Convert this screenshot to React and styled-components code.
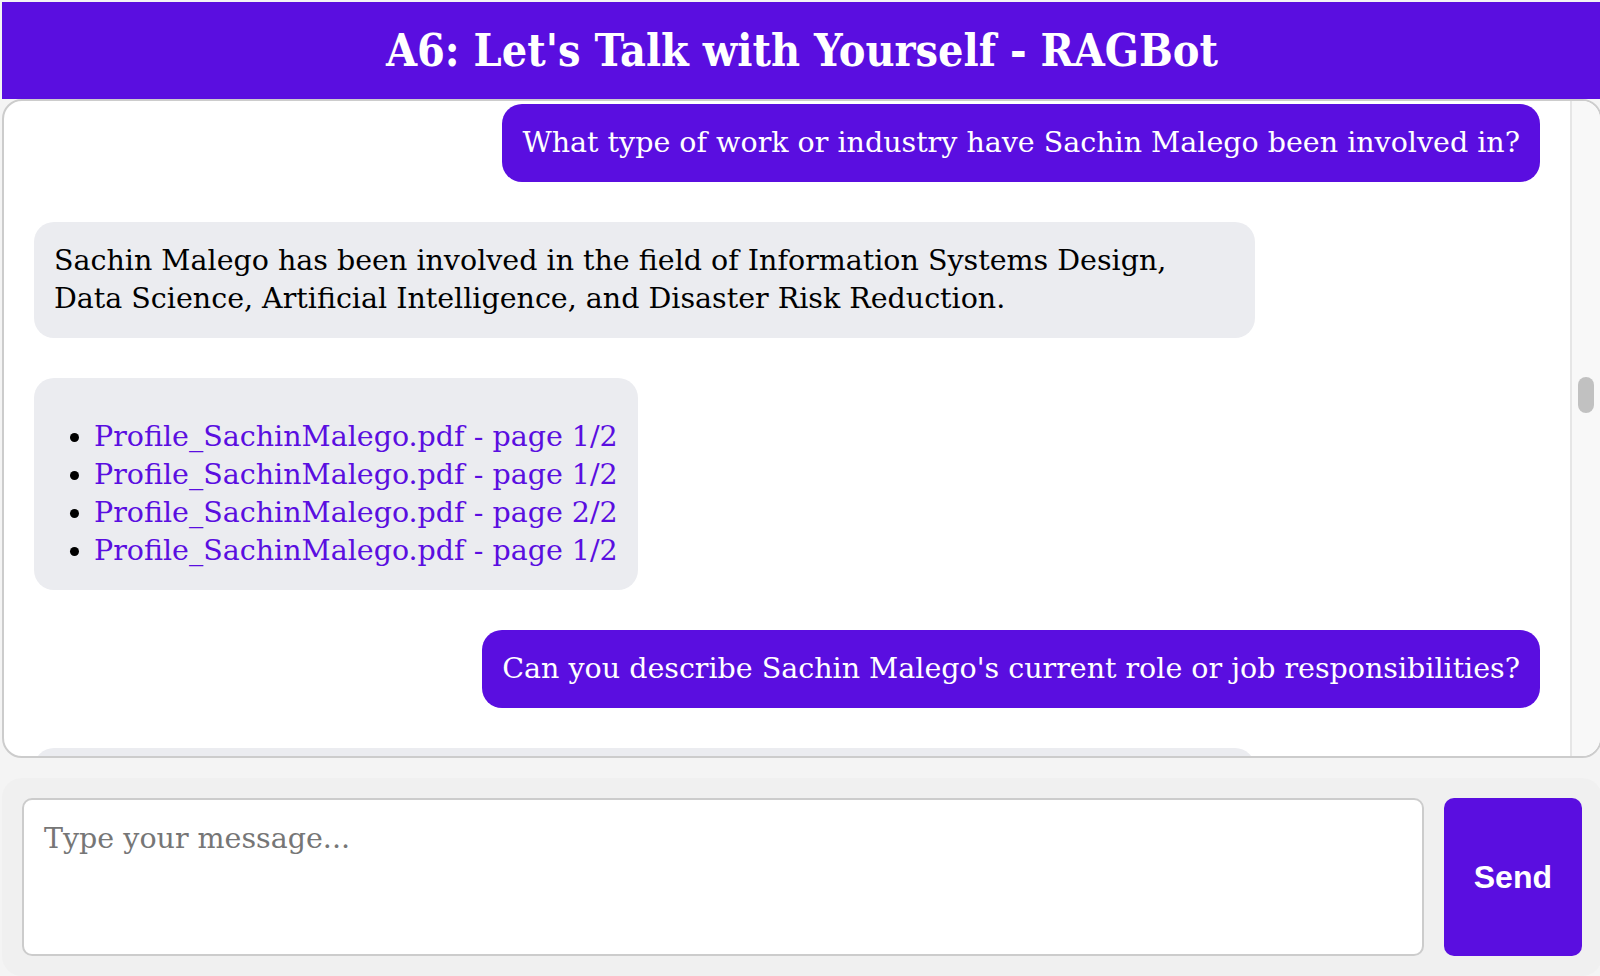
import React from "react";
import styled, { createGlobalStyle } from "styled-components";

const PURPLE = "#5a0ee0";
const BODY_FONT = `"DejaVu Serif", "Liberation Serif", serif`;

const GlobalStyle = createGlobalStyle`
  html, body {
    margin: 0;
    padding: 0;
    height: 100%;
    overflow: hidden;
    background: #f4f4f4;
  }
  #root { height: 100%; }
`;

const Page = styled.div`
  box-sizing: border-box;
  width: 1600px;
  height: 100vh;
  margin-left: 2px;
  padding-top: 2px;
  display: flex;
  flex-direction: column;
  font-family: ${BODY_FONT};
`;

const Header = styled.header`
  background: ${PURPLE};
  color: #fff;
  padding: 20px;
  text-align: center;
`;

const Title = styled.h1`
  margin: 0;
  font-family: "DejaVu Serif Condensed", "DejaVu Serif", serif;
  font-weight: bold;
  font-size: 44.5px;
  line-height: 57px;
`;

const ChatBox = styled.main`
  flex: 1;
  min-height: 0;
  display: flex;
  background: #fff;
  border: 2px solid #cccccc;
  border-radius: 20px;
  overflow: hidden;
`;

const Thread = styled.div`
  flex: 1;
  min-width: 0;
  display: flex;
  flex-direction: column;
  gap: 40px;
  padding: 3px 20px 20px;
  overflow: hidden;
`;

const ScrollTrack = styled.div`
  flex: none;
  box-sizing: border-box;
  width: 30px;
  padding: 276px 6px 0;
  background: #f8f8f8;
  border-left: 2px solid #e6e6e6;
`;

const ScrollThumb = styled.div`
  height: 36px;
  border-radius: 8px;
  background: #c1c1c1;
`;

const Bubble = styled.div`
  flex: none;
  box-sizing: border-box;
  max-width: 80%;
  margin: 0 10px;
  padding: 20px;
  border-radius: 20px;
  font-size: 28.5px;
  line-height: 38px;
  align-self: ${(p) => (p.$from === "user" ? "flex-end" : "flex-start")};
  background: ${(p) => (p.$from === "user" ? PURPLE : "#ebecf0")};
  color: ${(p) => (p.$from === "user" ? "#fff" : "#000")};
`;

const SourceList = styled.ul`
  margin: 20px 0 0;
  padding-left: 40px;
`;

const SourceLink = styled.a`
  color: ${PURPLE};
  text-decoration: none;
`;

const Composer = styled.form`
  margin: 20px 0 0;
  display: flex;
  gap: 20px;
  padding: 20px;
  background: #f0f0f0;
  border-radius: 20px;
`;

const MessageInput = styled.textarea`
  flex: 1;
  box-sizing: border-box;
  height: 158px;
  padding: 20px;
  border: 2px solid #cccccc;
  border-radius: 10px;
  background: #fff;
  font-family: ${BODY_FONT};
  font-size: 28.5px;
  line-height: 38px;
  color: #000;
  resize: none;
  outline: none;

  &::placeholder {
    color: #767676;
  }
`;

const SendButton = styled.button`
  padding: 0 30px;
  border: none;
  border-radius: 10px;
  background: ${PURPLE};
  color: #fff;
  font-family: "Liberation Sans", Arial, sans-serif;
  font-weight: bold;
  font-size: 32px;
  cursor: pointer;
`;

const src = (p) => `Profile_SachinMalego.pdf - page ${p}/2`;

const MESSAGES = [
  {
    from: "user",
    text: "What type of work or industry have Sachin Malego been involved in?",
  },
  {
    from: "bot",
    text: "Sachin Malego has been involved in the field of Information Systems Design, Data Science, Artificial Intelligence, and Disaster Risk Reduction.",
  },
  { from: "bot", sources: [1, 1, 2, 1] },
  {
    from: "user",
    text: "Can you describe Sachin Malego's current role or job responsibilities?",
  },
  {
    from: "bot",
    text: "Sachin Malego works on designing information systems and applying data science to disaster risk reduction.",
  },
];

function Message({ message }) {
  if (message.sources) {
    return (
      <Bubble $from="bot">
        <SourceList>
          {message.sources.map((p, i) => (
            <li key={i}>
              <SourceLink href="#">{src(p)}</SourceLink>
            </li>
          ))}
        </SourceList>
      </Bubble>
    );
  }
  return <Bubble $from={message.from}>{message.text}</Bubble>;
}

export default function App() {
  return (
    <>
      <GlobalStyle />
      <Page>
        <Header>
          <Title>A6: Let's Talk with Yourself - RAGBot</Title>
        </Header>
        <ChatBox>
          <Thread>
            {MESSAGES.map((m, i) => (
              <Message key={i} message={m} />
            ))}
          </Thread>
          <ScrollTrack>
            <ScrollThumb />
          </ScrollTrack>
        </ChatBox>
        <Composer onSubmit={(e) => e.preventDefault()}>
          <MessageInput placeholder="Type your message..." />
          <SendButton type="submit">Send</SendButton>
        </Composer>
      </Page>
    </>
  );
}
